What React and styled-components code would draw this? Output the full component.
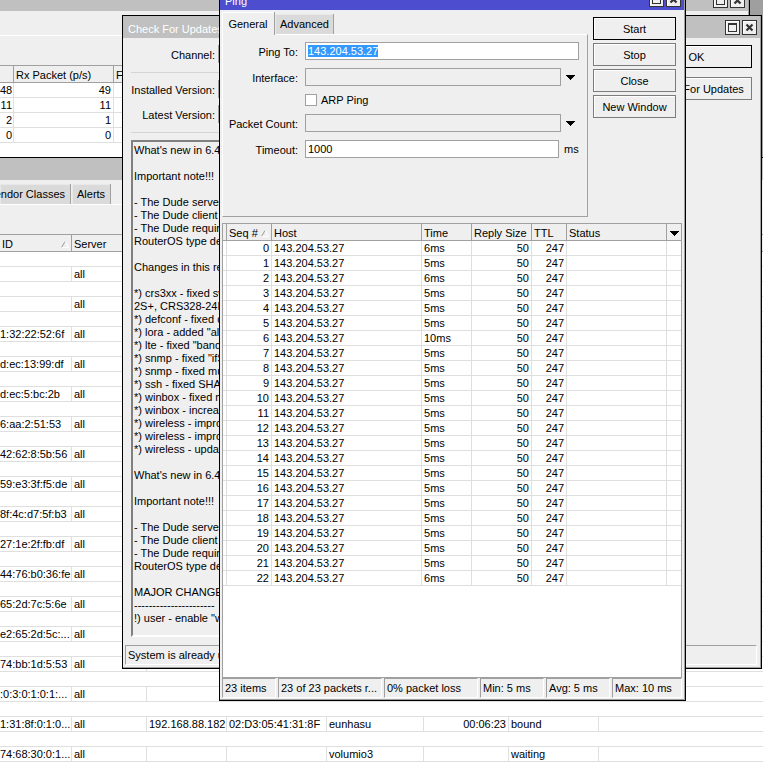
import React, { useEffect, useRef } from "react";
import styled, { createGlobalStyle } from "styled-components";

const clients = [
  { id: "" },
  { id: "" },
  { id: "1:32:22:52:6f" },
  { id: "d:ec:13:99:df" },
  { id: "d:ec:5:bc:2b" },
  { id: "6:aa:2:51:53" },
  { id: "42:62:8:5b:56" },
  { id: "59:e3:3f:f5:de" },
  { id: "8f:4c:d7:5f:b3" },
  { id: "27:1e:2f:fb:df" },
  { id: "44:76:b0:36:fe" },
  { id: "65:2d:7c:5:6e" },
  { id: "e2:65:2d:5c:..." },
  { id: "74:bb:1d:5:53" },
  { id: ":0:3:0:1:0:1:..." },
  {
    id: "1:31:8f:0:1:0...",
    address: "192.168.88.182",
    mac: "02:D3:05:41:31:8F",
    host: "eunhasu",
    expires: "00:06:23",
    status: "bound"
  },
  { id: "74:68:30:0:1...", host: "volumio3", status: "waiting" }
];

const packets = [[48, 49], [11, 11], [2, 1], [0, 0]];

const times = [6, 5, 6, 5, 5, 5, 10, 5, 5, 5, 5, 5, 5, 5, 5, 5, 5, 5, 5, 5, 5, 5, 6];

const changelog = `What's new in 6.45:

Important note!!!

- The Dude server must be updated
- The Dude client must be updated
- The Dude requires the same
RouterOS type device.

Changes in this release:

*) crs3xx - fixed switch
2S+, CRS328-24P-4S+
*) defconf - fixed default
*) lora - added "alt" option
*) lte - fixed "band" option
*) snmp - fixed "ifSpeed"
*) snmp - fixed multiple
*) ssh - fixed SHA2
*) winbox - fixed menu
*) winbox - increased
*) wireless - improved
*) wireless - improved
*) wireless - updated

What's new in 6.45:

Important note!!!

- The Dude server must be updated
- The Dude client must be updated
- The Dude requires the same
RouterOS type device.

MAJOR CHANGES
----------------------
!) user - enable "winbox"`;

const WindowButtons = () => (
  <ButtonPair>
    <CaptionButton aria-label="Maximize">
      <svg width="11" height="11" viewBox="0 0 11 11" shapeRendering="crispEdges">
        <rect x="1.5" y="1.5" width="8" height="8" fill="none" stroke="#333" />
        <path d="M1 2.5h9" stroke="#333" />
      </svg>
    </CaptionButton>
    <CaptionButton aria-label="Close window">
      <svg width="11" height="11" viewBox="0 0 11 11">
        <path d="M2.5 2.5l6 6M8.5 2.5l-6 6" stroke="#333" strokeWidth="2.2" />
      </svg>
    </CaptionButton>
  </ButtonPair>
);

const Arrow = () => (
  <svg width="9" height="5" viewBox="0 0 9 5" shapeRendering="crispEdges">
    <path d="M0 0h9L4.5 5z" fill="#000" />
  </svg>
);

const SortMark = () => (
  <svg width="8" height="7" viewBox="0 0 8 7">
    <path d="M0.5 6.5L4 0.5" fill="none" stroke="#999" />
    <path d="M4 0.5l3.5 6h-7" fill="none" stroke="#fff" />
  </svg>
);

const LeaseWindow = () => (
  <LeaseFrame>
    <Inner>
      <TitleBar />
      <LeaseTabs>
        <Tab>Vendor Classes</Tab>
        <Tab>Alerts</Tab>
      </LeaseTabs>
      <Toolbar />
      <Table>
        <colgroup>
          <Col $w={72} />
          <Col $w={75} />
          <Col $w={80} />
          <Col $w={100} />
          <Col $w={97} />
          <Col $w={85} />
          <Col $w={90} />
          <col />
        </colgroup>
        <thead>
          <tr>
            <Th>
              <HeadLabel>
                ID <SortMark />
              </HeadLabel>
            </Th>
            <Th>Server</Th>
            <Th>Address</Th>
            <Th>MAC Address</Th>
            <Th>Host Name</Th>
            <Th>Expires After</Th>
            <Th>Status</Th>
            <Th />
          </tr>
        </thead>
        <tbody>
          {clients.map((c, i) => (
            <React.Fragment key={i}>
              <tr>
                <Td colSpan={8} />
              </tr>
              <tr>
                <Td $flush>{c.id}</Td>
                <Td>all</Td>
                <Td $right>{c.address}</Td>
                <Td>{c.mac}</Td>
                <Td>{c.host}</Td>
                <Td $right>{c.expires}</Td>
                <Td>{c.status}</Td>
                <Td />
              </tr>
            </React.Fragment>
          ))}
        </tbody>
      </Table>
    </Inner>
  </LeaseFrame>
);

const TrafficWindow = () => (
  <TrafficFrame>
    <Inner>
      <TitleBar>
        <WindowButtons />
      </TitleBar>
      <TrafficTop />
      <Toolbar />
      <Table>
        <colgroup>
          <Col $w={14} />
          <Col $w={100} />
          <Col $w={100} />
          <col />
        </colgroup>
        <thead>
          <tr>
            <Th />
            <Th>Rx Packet (p/s)</Th>
            <Th>FP Tx</Th>
            <Th />
          </tr>
        </thead>
        <tbody>
          {packets.map(([tx, rx]) => (
            <tr key={tx}>
              <Td $right $flush>{tx}</Td>
              <Td $right>{rx}</Td>
              <Td />
              <Td />
            </tr>
          ))}
        </tbody>
      </Table>
    </Inner>
  </TrafficFrame>
);

const UpdatesWindow = () => (
  <UpdatesFrame>
    <Inner>
      <TitleBar>
        Check For Updates
        <WindowButtons />
      </TitleBar>
      <UpdatesBody>
        <UpdatesMain>
          <UpdateRow>
            <Label htmlFor="channel">Channel:</Label>
            <Select id="channel" />
          </UpdateRow>
          <Divider />
          <UpdateRow>
            <Label htmlFor="installed">Installed Version:</Label>
            <Input id="installed" $grey readOnly />
          </UpdateRow>
          <UpdateRow>
            <Label htmlFor="latest">Latest Version:</Label>
            <Input id="latest" $grey readOnly />
          </UpdateRow>
          <Divider />
          <Changelog aria-label="Changelog" readOnly value={changelog} />
        </UpdatesMain>
        <UpdateButtons>
          <Button $primary>OK</Button>
          <Button>Check For Updates</Button>
        </UpdateButtons>
      </UpdatesBody>
      <UpdateStatus>
        <StatusCell $grow>System is already up to date</StatusCell>
      </UpdateStatus>
    </Inner>
  </UpdatesFrame>
);

const PingWindow = () => {
  const target = useRef(null);

  useEffect(() => {
    target.current.focus();
    target.current.select();
  }, []);

  return (
    <PingFrame>
      <Inner>
        <TitleBar $active>
          Ping
          <WindowButtons />
        </TitleBar>
        <PingBody>
          <PingTop>
            <PingForm>
              <PingTabs>
                <Tab $active>General</Tab>
                <Tab>Advanced</Tab>
              </PingTabs>
              <Panel>
                <Label htmlFor="ping-to">Ping To:</Label>
                <Input id="ping-to" ref={target} defaultValue="143.204.53.27" />
                <Label htmlFor="interface">Interface:</Label>
                <Field>
                  <Select id="interface" />
                  <ArrowBox>
                    <Arrow />
                  </ArrowBox>
                </Field>
                <CheckRow>
                  <Checkbox id="arp" type="checkbox" />
                  <label htmlFor="arp">ARP Ping</label>
                </CheckRow>
                <Label htmlFor="count">Packet Count:</Label>
                <Field>
                  <Input id="count" $grey />
                  <ArrowBox>
                    <Arrow />
                  </ArrowBox>
                </Field>
                <Label htmlFor="timeout">Timeout:</Label>
                <Field>
                  <Input id="timeout" defaultValue="1000" />
                  <Unit>ms</Unit>
                </Field>
              </Panel>
            </PingForm>
            <PingButtons>
              <Button $primary>Start</Button>
              <Button>Stop</Button>
              <Button>Close</Button>
              <Button>New Window</Button>
            </PingButtons>
          </PingTop>
          <Results>
            <Table>
              <colgroup>
                <Col $w={4} />
                <Col $w={45} />
                <Col $w={150} />
                <Col $w={50} />
                <Col $w={60} />
                <Col $w={35} />
                <Col $w={100} />
                <col />
              </colgroup>
              <thead>
                <tr>
                  <Th $flush />
                  <Th>
                    <HeadLabel>
                      Seq # <SortMark />
                    </HeadLabel>
                  </Th>
                  <Th>Host</Th>
                  <Th>Time</Th>
                  <Th>Reply Size</Th>
                  <Th>TTL</Th>
                  <Th>Status</Th>
                  <Th $last>
                    <Arrow />
                  </Th>
                </tr>
              </thead>
              <tbody>
                {times.map((ms, seq) => (
                  <tr key={seq}>
                    <Td $flush />
                    <Td $right>{seq}</Td>
                    <Td>143.204.53.27</Td>
                    <Td>{ms}ms</Td>
                    <Td $right>50</Td>
                    <Td $right>247</Td>
                    <Td />
                    <Td $last />
                  </tr>
                ))}
              </tbody>
            </Table>
          </Results>
          <PingStatus>
            <StatusCell $w={54}>23 items</StatusCell>
            <StatusCell $w={104}>23 of 23 packets r...</StatusCell>
            <StatusCell $w={94}>0% packet loss</StatusCell>
            <StatusCell $w={64}>Min: 5 ms</StatusCell>
            <StatusCell $w={64}>Avg: 5 ms</StatusCell>
            <StatusCell $grow>Max: 10 ms</StatusCell>
          </PingStatus>
        </PingBody>
      </Inner>
    </PingFrame>
  );
};

export default function App() {
  return (
    <Desktop>
      <GlobalStyle />
      <LeaseWindow />
      <TrafficWindow />
      <UpdatesWindow />
      <PingWindow />
    </Desktop>
  );
}

const GlobalStyle = createGlobalStyle`
  * {
    box-sizing: border-box;
  }
  body {
    margin: 0;
    color: #000;
  }
  body, button, input, select, textarea {
    font-family: "Liberation Sans", Arial, sans-serif;
    font-size: 11px;
  }
`;

const Desktop = styled.main`
  position: relative;
  height: 100vh;
  overflow: hidden;
  background: #9f9f9f;
`;

const Frame = styled.section`
  position: absolute;
  display: flex;
  border: 1px solid #000;
`;

const LeaseFrame = styled(Frame)`
  top: 157px;
  left: -1px;
  right: -3px;
  bottom: -30px;
`;

const TrafficFrame = styled(Frame)`
  top: -12px;
  left: -1px;
  right: 13px;
  height: 170px;
`;

const UpdatesFrame = styled(Frame)`
  top: 15px;
  left: 122px;
  right: 1px;
  bottom: 94px;
`;

const PingFrame = styled(Frame)`
  top: -13px;
  left: 219px;
  right: 77px;
  bottom: 62px;
`;

const Inner = styled.div`
  flex: 1;
  min-width: 0;
  display: flex;
  flex-direction: column;
  background: #efefef;
  border-right: 1px solid #a0a0a0;
  ${LeaseFrame} &, ${TrafficFrame} & {
    background: #fff;
  }
  ${UpdatesFrame} &, ${PingFrame} & {
    border-bottom: 1px solid #a0a0a0;
  }
`;

const TitleBar = styled.header`
  display: flex;
  align-items: center;
  flex: none;
  height: 22px;
  padding: 4px 3px 0 5px;
  color: #fff;
  background: ${props => props.$active ? "#4d4dcf" : "#c0c0c0"};
`;

const ButtonPair = styled.div`
  display: flex;
  gap: 2px;
  margin-left: auto;
  align-self: flex-start;
`;

const CaptionButton = styled.button`
  display: flex;
  align-items: center;
  justify-content: center;
  width: 15px;
  height: 15px;
  padding: 0;
  border: 1px solid #333;
  background: #efefef;
  box-shadow: inset 1px 1px #fff;
`;

const TrafficTop = styled.div`
  height: 24px;
  background: #efefef;
`;

const Toolbar = styled.div`
  height: 30px;
  background: #efefef;
  border-top: 1px solid #fff;
`;

const LeaseTabs = styled.div`
  display: flex;
  align-items: flex-end;
  gap: 1px;
  height: 24px;
  background: #efefef;
  padding-top: 4px;
`;

const PingTabs = styled.div`
  display: flex;
  align-items: flex-end;
  height: 22px;
`;

const Tab = styled.button`
  position: relative;
  height: ${props => props.$active ? "23px" : "20px"};
  margin-bottom: ${props => props.$active ? "-1px" : "0"};
  padding: 0 5px;
  white-space: nowrap;
  border: 0 solid #a0a0a0;
  border-right-width: 1px;
  background: ${props => props.$active ? "#efefef" : "#dadada"};
  box-shadow: inset 1px 1px ${props => props.$active ? "#fff" : "#e8e8e8"};
  ${LeaseTabs} &:first-child {
    width: 71px;
    padding: 0 5px 0 0;
    display: flex;
    align-items: center;
    justify-content: flex-end;
  }
  ${PingTabs} &:first-child {
    width: 53px;
  }
  ${PingTabs} &:last-child {
    width: 59px;
  }
`;

const Table = styled.table`
  width: 100%;
  table-layout: fixed;
  border-spacing: 0;
  background: #fff;
`;

const Col = styled.col`
  width: ${props => props.$w}px;
`;

const Th = styled.th`
  height: 18px;
  padding: ${props => props.$flush ? "0" : "2px 2px 0"};
  line-height: 14px;
  font-weight: normal;
  text-align: ${props => props.$last ? "center" : "left"};
  white-space: nowrap;
  overflow: hidden;
  background: #efefef;
  border: 1px solid #a0a0a0;
  border-left: 0;
  ${props => props.$last && "border-right: 0;"}
  > svg {
    display: block;
    margin: 0 auto;
  }
`;

const HeadLabel = styled.span`
  display: flex;
  align-items: center;
  justify-content: space-between;
`;

const Td = styled.td`
  height: 15px;
  padding: ${props => props.$flush ? "0" : "0 2px"};
  line-height: 14px;
  text-align: ${props => props.$right ? "right" : "left"};
  white-space: nowrap;
  overflow: hidden;
  border-bottom: 1px solid #dfdfdf;
  border-right: ${props => props.$last ? "0" : "1px solid #dfdfdf"};
  ${TrafficFrame} &:first-child {
    padding-right: 1px;
  }
`;

const UpdatesBody = styled.div`
  flex: 1;
  min-height: 0;
  display: flex;
  gap: 10px;
  padding: 7px 8px 8px 8px;
`;

const UpdatesMain = styled.div`
  flex: 1;
  min-width: 0;
  display: flex;
  flex-direction: column;
  gap: 7px;
`;

const UpdateRow = styled.div`
  display: grid;
  grid-template-columns: 84px 1fr;
  gap: 3px;
`;

const Label = styled.label`
  align-self: center;
  padding-top: 1px;
  text-align: right;
  white-space: nowrap;
`;

const Divider = styled.hr`
  width: 100%;
  margin: 2px 0 0;
  border: 0;
  border-top: 1px solid #d4d4d4;
`;

const Changelog = styled.textarea`
  flex: 1;
  padding: 2px 1px;
  line-height: 13px;
  white-space: pre;
  overflow: hidden;
  resize: none;
  outline: 0;
  color: #000;
  background: #efefef;
  border: 2px solid;
  border-color: #808080 #fff #fff #808080;
  border-radius: 0;
`;

const UpdateButtons = styled.div`
  flex: none;
  width: 111px;
  display: flex;
  flex-direction: column;
  gap: 9px;
`;

const Button = styled.button`
  height: 23px;
  padding: 0 4px;
  white-space: nowrap;
  color: #000;
  background: #efefef;
  border: 1px solid ${props => props.$primary ? "#000" : "#7c7c7c"};
  box-shadow: inset 1px 1px #fff;
`;

const UpdateStatus = styled.footer`
  display: flex;
  padding: 0 3px 2px 2px;
`;

const StatusCell = styled.div`
  height: 20px;
  padding-left: 2px;
  line-height: 19px;
  white-space: nowrap;
  overflow: hidden;
  width: ${props => props.$w ? `${props.$w}px` : "auto"};
  flex: ${props => props.$grow ? "1" : "none"};
  border: 1px solid;
  border-color: #a0a0a0 #fff #fff #a0a0a0;
`;

const PingBody = styled.div`
  flex: 1;
  min-height: 0;
  display: flex;
  flex-direction: column;
  padding: 2px 2px 1px;
`;

const PingTop = styled.div`
  display: flex;
  gap: 5px;
  padding-right: 6px;
`;

const PingForm = styled.div`
  flex: 1;
  min-width: 0;
`;

const Panel = styled.div`
  display: grid;
  grid-template-columns: 75px 1fr;
  gap: 8px 7px;
  padding: 7px 8px 58px 0;
  border: 1px solid;
  border-color: #fff #a0a0a0 #a0a0a0 #fff;
`;

const Field = styled.div`
  display: flex;
  align-items: center;
  gap: 5px;
`;

const Input = styled.input`
  flex: 1;
  min-width: 0;
  height: 18px;
  padding: 0 2px;
  outline: 0;
  color: #000;
  background: ${props => props.$grey ? "#efefef" : "#fff"};
  border: 1px solid #a0a0a0;
  border-radius: 0;
  &::selection {
    color: #fff;
    background: #3399ff;
  }
`;

const Select = styled.select`
  flex: 1;
  min-width: 0;
  height: 18px;
  appearance: none;
  background: #efefef;
  border: 1px solid #a0a0a0;
  border-radius: 0;
`;

const ArrowBox = styled.span`
  display: flex;
  width: 13px;
`;

const Unit = styled.span`
  width: 15px;
`;

const CheckRow = styled.div`
  grid-column: 2;
  display: flex;
  align-items: center;
  gap: 4px;
  height: 12px;
`;

const Checkbox = styled.input`
  appearance: none;
  width: 12px;
  height: 12px;
  margin: 0;
  background: #fff;
  border: 1px solid #a0a0a0;
`;

const PingButtons = styled.div`
  flex: none;
  width: 83px;
  display: flex;
  flex-direction: column;
  gap: 3px;
  padding-top: 5px;
`;

const Results = styled.div`
  flex: 1;
  min-height: 0;
  margin-top: 6px;
  overflow: hidden;
  background: #fff;
  border: solid #a0a0a0;
  border-width: 0 1px 1px;
`;

const PingStatus = styled.footer`
  flex: none;
  display: flex;
  gap: 2px;
`;
